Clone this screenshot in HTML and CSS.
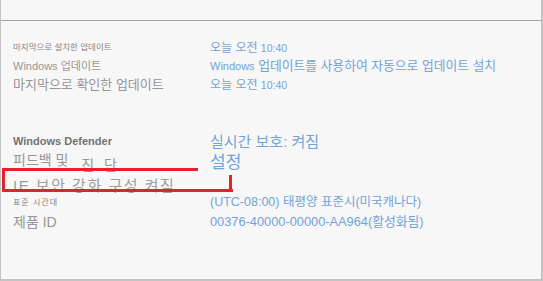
FILE: index.html
```html
<!DOCTYPE html>
<html>
<head>
	<title>시스템 정보</title>

	<link rel="stylesheet" href="styles.css">
</head>
<body>

	<div class="window">
		<div class="titlebar"></div>

		<div class="info first">
			<div class="label tiny">마지막으로 설치한 업데이트</div>
			<div class="value">오늘 오전 <span class="time">10:40</span></div>

			<div class="label small"><span class="latin">Windows</span> 업데이트</div>
			<div class="value long"><span class="latin">Windows</span> 업데이트를 사용하여 자동으로 업데이트 설치</div>

			<div class="label medium">마지막으로 확인한 업데이트</div>
			<div class="value">오늘 오전 <span class="time">10:40</span></div>
		</div>

		<div class="info second">
			<div class="label strong">Windows Defender</div>
			<div class="value big">실시간 보호: 켜짐</div>

			<div class="label large">피드백 및 <span class="drop">진 단</span></div>
			<div class="value bigger">설정</div>

			<div class="label wide">IE 보안 강화 구성 켜짐</div>
			<div class="value"></div>

			<div class="label micro">표준 시간대</div>
			<div class="value zone">(UTC-08:00) 태평양 표준시(미국캐나다)</div>

			<div class="label large">제품 ID</div>
			<div class="value product">00376-40000-00000-AA964(활성화됨)</div>
		</div>
	</div>

	<!-- red highlight drawn over the IE row -->
	<svg class="mark" width="543" height="281" viewBox="0 0 543 281">
		<rect x="2" y="168" width="196" height="3" />
		<rect x="2" y="168" width="3" height="24" />
		<rect x="2" y="189" width="231" height="3" />
		<rect x="229" y="175" width="3" height="17" />
	</svg>

</body>
</html>
```

FILE: styles.css
```css
body {
	margin: 0;
	font-family: "Liberation Sans", "Noto Sans CJK KR", sans-serif;
}
.window {
	width: 540px;
	height: 279px;
	background: #f7f7f7;
	border-left: 1px solid #c2c2c2;
	border-right: 2px solid #c2c2c2;
	border-bottom: 2px solid #c2c2c2;
}
.titlebar {
	height: 20px;
	border-bottom: 1px solid #a0a0a0;
}
.info {
	display: grid;
	grid-template-columns: 197px 1fr;
	align-items: center;
	padding-left: 12px;
	line-height: 1;
}
.first {
	margin-top: 17px;
	grid-template-rows: 19px 18px 19px;
}
.second {
	margin-top: 38px;
	grid-template-rows: 19px 23px 22px 13px 26px;
}
.label {
	color: #969696;
	white-space: nowrap;
}
.value {
	color: #72a3d8;
	font-size: 12px;
	white-space: nowrap;
}
.latin { font-size: 11px; }
.time { font-size: 10.5px; }
.long { font-size: 12.8px; }
.zone { font-size: 12.5px; }
.product { font-size: 12.8px; }

.tiny { font-size: 8.5px; color: #858585; }
.small { font-size: 11px; }
.medium { font-size: 13px; }
.strong {
	font-size: 11px;
	font-weight: bold;
	color: #727272;
}
.large { font-size: 14px; }
.drop {
	margin-left: 9px;
	vertical-align: -5px;
	word-spacing: 6px;
}
.wide {
	font-size: 15px;
	letter-spacing: 1.5px;
	color: #9e9e9e;
}
.micro {
	font-size: 8px;
	letter-spacing: 1px;
	color: #858585;
}
.big { font-size: 15px; }
.bigger { font-size: 17px; }

.mark {
	position: absolute;
	top: 0;
	left: 0;
	fill: #e8202a;
	pointer-events: none;
}
```
